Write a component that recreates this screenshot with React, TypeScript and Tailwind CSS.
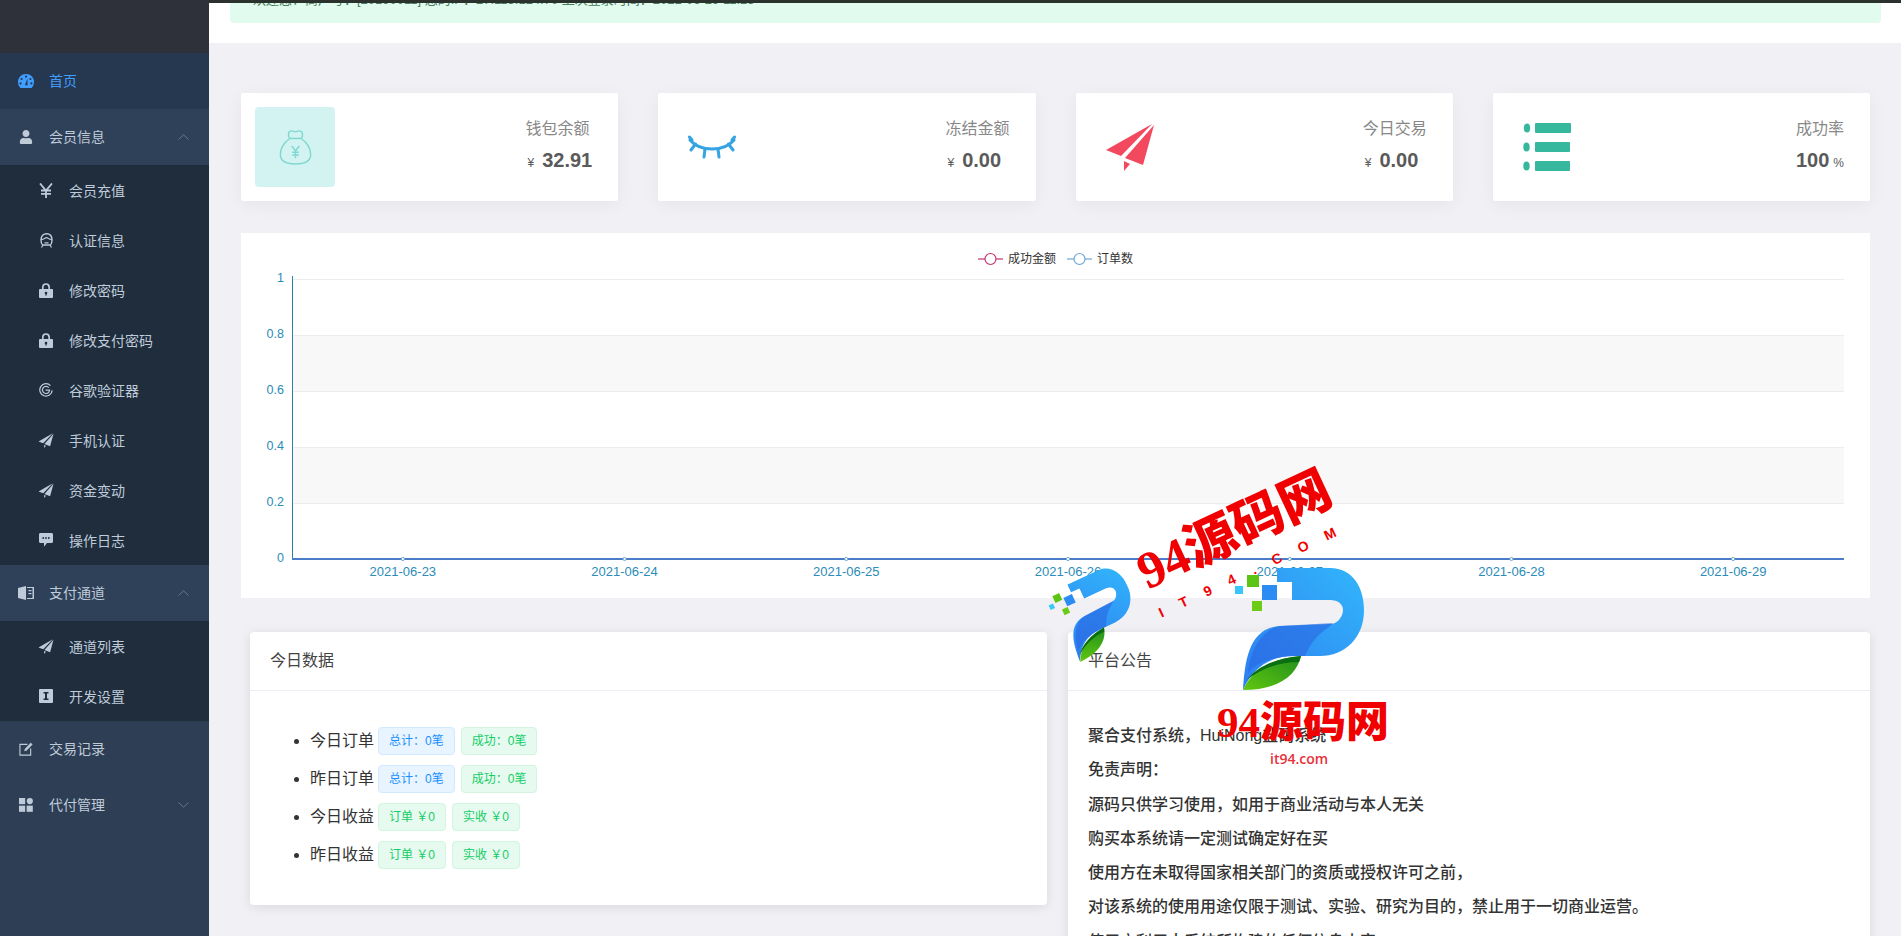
import { type ReactNode, type SVGProps } from "react";
import { FaUser } from "react-icons/fa";

const sansStack = "font-['Liberation_Sans','Noto_Sans_CJK_SC',sans-serif]";

// --- Small hand-drawn sidebar icons --------------------------------------------
function GaugeIcon(props: SVGProps<SVGSVGElement>) {
  return (
    <svg viewBox="0 0 16 14" {...props}>
      <path d="M8 0 C3.5 0 0 3.5 0 8 C0 10.5 1 12.6 2.5 14 H13.5 C15 12.6 16 10.5 16 8 C16 3.5 12.5 0 8 0 Z" fill="currentColor" />
      <g fill="#263750">
        <circle cx="8" cy="2.6" r="1.1" />
        <circle cx="3.6" cy="5" r="1.1" />
        <circle cx="12.4" cy="5" r="1.1" />
        <circle cx="2.6" cy="9.4" r="1.1" />
        <circle cx="13.4" cy="9.4" r="1.1" />
        <path d="M7 11 L9.4 4.5 L9.6 11.5 Z" />
      </g>
    </svg>
  );
}

function YenIcon(props: SVGProps<SVGSVGElement>) {
  return (
    <svg viewBox="0 0 14 15" fill="none" stroke="currentColor" strokeWidth="1.8" {...props}>
      <path d="M1 0.5 L7 7.5 L13 0.5 M7 7.5 V15 M2 7.5 H12 M2 10.8 H12" />
    </svg>
  );
}

function HeadIcon(props: SVGProps<SVGSVGElement>) {
  return (
    <svg viewBox="0 0 15 15" fill="none" stroke="currentColor" {...props}>
      <path d="M2 7 C2 2.5 4.5 0.8 7.5 0.8 C10.5 0.8 13 2.5 13 7 C13 9 12.8 11 11.5 12 H3.5 C2.2 11 2 9 2 7 Z" strokeWidth="1.4" />
      <path d="M2 6.5 C5 6.5 6 5 7.5 4.5 C9 5 10 6.5 13 6.5" strokeWidth="1.3" />
      <path d="M4 12 L2.5 14.5 M11 12 L12.5 14.5 M5.5 9.8 H9.5" strokeWidth="1.2" />
    </svg>
  );
}

function LockIcon(props: SVGProps<SVGSVGElement>) {
  return (
    <svg viewBox="0 0 14 15" {...props}>
      <path d="M3.8 7 V4.4 C3.8 2.4 5.2 1 7 1 C8.8 1 10.2 2.4 10.2 4.4 V7" fill="none" stroke="currentColor" strokeWidth="1.7" />
      <path d="M1 6 H13 C13.5 6 14 6.5 14 7 V14 C14 14.5 13.5 15 13 15 H1 C0.5 15 0 14.5 0 14 V7 C0 6.5 0.5 6 1 6 Z" fill="currentColor" />
      <circle cx="7" cy="10" r="1.3" fill="#1f2d3d" />
      <rect x="6.4" y="10" width="1.2" height="2.6" fill="#1f2d3d" />
    </svg>
  );
}

function RingGIcon(props: SVGProps<SVGSVGElement>) {
  return (
    <svg viewBox="0 0 14 14" fill="none" stroke="currentColor" strokeWidth="1.2" {...props}>
      <path d="M11.5 2.6 A6.2 6.2 0 1 0 13.2 7.4" />
      <path d="M9.8 4.6 A3.6 3.6 0 1 0 10.6 7.2 H6.6" />
    </svg>
  );
}

function PlaneIcon(props: SVGProps<SVGSVGElement>) {
  return (
    <svg viewBox="0 0 48 48" fill="currentColor" {...props}>
      <path d="M46 1 L0 27 L15 33 Z" />
      <path d="M48 2 L19 35 L37 42 Z" />
      <path d="M18 38 L24 41 L18 48 Z" />
    </svg>
  );
}

function BubbleIcon(props: SVGProps<SVGSVGElement>) {
  return (
    <svg viewBox="0 0 14 14" {...props}>
      <path d="M1.5 0 H12.5 C13.4 0 14 0.6 14 1.5 V8.5 C14 9.4 13.4 10 12.5 10 H8 L5 13.8 V10 H1.5 C0.6 10 0 9.4 0 8.5 V1.5 C0 0.6 0.6 0 1.5 0 Z" fill="currentColor" />
      <g fill="#1f2d3d">
        <circle cx="4.2" cy="5" r="0.9" />
        <circle cx="7" cy="5" r="0.9" />
        <circle cx="9.8" cy="5" r="0.9" />
      </g>
    </svg>
  );
}

function BookIcon(props: SVGProps<SVGSVGElement>) {
  return (
    <svg viewBox="0 0 16 14" fill="currentColor" {...props}>
      <path d="M0 2 L8 0 V14 L0 12 Z" />
      <path d="M9 1 H16 V13 H9 V12 H14.5 V2 H9 Z" />
      <rect x="10.5" y="4" width="3" height="1.2" />
      <rect x="10.5" y="7" width="3" height="1.2" />
    </svg>
  );
}

function InfoSquareIcon(props: SVGProps<SVGSVGElement>) {
  return (
    <svg viewBox="0 0 14 14" {...props}>
      <rect width="14" height="14" rx="1" fill="currentColor" />
      <path d="M4.5 3 H9.5 V4.5 H8 V9.5 H9.5 V11 H4.5 V9.5 H6 V4.5 H4.5 Z" fill="#1f2d3d" />
    </svg>
  );
}

function EditIcon(props: SVGProps<SVGSVGElement>) {
  return (
    <svg viewBox="0 0 15 15" fill="none" stroke="currentColor" {...props}>
      <path d="M9 2.5 H1 V14 H12.5 V7" strokeWidth="1.2" />
      <path d="M6 9.5 L6.5 7.5 L12.5 1 L14.2 2.6 L8 9 Z" fill="currentColor" strokeWidth="0.6" />
    </svg>
  );
}

function AppsIcon(props: SVGProps<SVGSVGElement>) {
  return (
    <svg viewBox="0 0 15 15" fill="currentColor" {...props}>
      <rect width="6.6" height="6.6" />
      <circle cx="11.6" cy="3.3" r="3.3" />
      <rect y="8.2" width="6.6" height="6.6" />
      <rect x="8.2" y="8.2" width="6.6" height="6.6" />
    </svg>
  );
}

function Chevron({ up }: { up?: boolean }) {
  return (
    <svg viewBox="0 0 11 6" className="absolute left-[178px] top-[25px] h-[6px] w-[11px]" fill="none" stroke="#66768a">
      <path d={up ? "M0.5 5.5 L5.5 0.8 L10.5 5.5" : "M0.5 0.5 L5.5 5.2 L10.5 0.5"} />
    </svg>
  );
}

// --- Stat card drawings --------------------------------------------------------
function MoneyBag() {
  return (
    <svg viewBox="0 0 34 38" className="h-[36px] w-[33px]" fill="none" stroke="#7fd8d0" strokeWidth="1.5">
      <path d="M11 10 C8 6 10 2 13 2 C15 2 15.5 3 17 3 C18.5 3 19 2 21 2 C24 2 26 6 23 10" />
      <path d="M11 10 H23" />
      <path d="M11 10 C4 15 1 21 1 27 C1 33 6 37 17 37 C28 37 33 33 33 27 C33 21 30 15 23 10" />
      <path d="M13 18 L17 23 L21 18 M17 23 V31 M13.5 24.5 H20.5 M13.5 27.5 H20.5" strokeWidth="1.5" />
    </svg>
  );
}

function ClosedEye() {
  return (
    <svg viewBox="0 0 48 24" className="h-[24px] w-[48px]" fill="none" stroke="#36a3e3" strokeWidth="3" strokeLinecap="round">
      <path d="M2 5 C12 17 36 17 46 5" />
      <path d="M1.5 2 L4 5 M3 15 L7.5 9 M16 22 L17 14 M31 22 L30 14 M45 15 L40.5 9 M46.5 2 L44 5" />
    </svg>
  );
}

function ListGlyph() {
  return (
    <svg viewBox="0 0 48 48" className="h-[48px] w-[48px]" fill="#36b89e">
      <ellipse cx="4" cy="5" rx="3.2" ry="4.5" />
      <rect x="12" y="0" width="36" height="10" rx="1" />
      <ellipse cx="3.5" cy="24" rx="3.2" ry="4.5" />
      <rect x="12" y="19" width="35" height="10" rx="1" />
      <ellipse cx="3.5" cy="43" rx="3.2" ry="4.5" />
      <rect x="12" y="38" width="35" height="10" rx="1" />
    </svg>
  );
}

// The "P" mark of the watermark. `id` keeps the gradients apart between the two copies.
function PLogo({ id, className }: { id: string; className?: string }) {
  return (
    <svg viewBox="0 0 129 122" className={className}>
      <defs>
        <linearGradient id={`${id}-b`} x1="0" y1="1" x2="1" y2="0">
          <stop offset="0" stopColor="#2d7df0" />
          <stop offset="1" stopColor="#32b6fb" />
        </linearGradient>
        <linearGradient id={`${id}-g`} x1="0" y1="1" x2="1" y2="0">
          <stop offset="0" stopColor="#62c70f" />
          <stop offset="1" stopColor="#1f8f1c" />
        </linearGradient>
      </defs>
      <path
        d="M42 0 H95 C118 0 129 20 129 42 C129 70 110 88 85 88 L60 88 C40 88 20 95 8 122 C10 90 15 60 45 58 L95 56 C103 56 108 48 108 42 C108 36 103 32 95 32 H57 V14 H42 Z"
        fill={`url(#${id}-b)`}
      />
      <path d="M45 58 L98 55 C92 62 80 65 70 88 L60 88 C40 88 20 95 13 105 C15 85 25 62 45 58 Z" fill="#2a62e0" opacity="0.55" />
      <path d="M8 122 C18 100 40 90 66 88 C62 106 45 122 8 122 Z" fill={`url(#${id}-g)`} />
      <path d="M12 112 C22 98 42 90 66 88 L64 94 C45 94 26 100 12 112 Z" fill="#0a6f12" />
      <rect x="12" y="7" width="12" height="12" fill="#5cc413" />
      <rect x="27" y="17" width="15" height="15" fill="#2b8df3" />
      <rect x="0" y="18" width="8" height="8" fill="#3bc6fb" />
      <rect x="17" y="33" width="10" height="10" fill="#6ccb16" />
    </svg>
  );
}

// --- Sidebar -------------------------------------------------------------------
type NavRowProps = {
  icon: ReactNode;
  label: string;
  chevron?: "up" | "down";
  active?: boolean;
  open?: boolean;
};

function NavRow({ icon, label, chevron, active, open }: NavRowProps) {
  return (
    <div
      className={`relative flex h-[56px] items-center pl-[18px] text-sm ${
        active ? "bg-[#263750] text-[#409eff]" : "text-[#bfcbd9]"
      } ${open ? "bg-[#2f4159]" : ""}`}
    >
      <span className="flex w-[16px] justify-center">{icon}</span>
      <span className="ml-[15px]">{label}</span>
      {chevron && <Chevron up={chevron === "up"} />}
    </div>
  );
}

function SubRow({ icon, label }: { icon: ReactNode; label: string }) {
  return (
    <div className="flex h-[50px] items-center pl-[38px] text-sm text-[#bfcbd9]">
      <span className="flex w-[16px] justify-center">{icon}</span>
      <span className="ml-[15px] pt-[1px]">{label}</span>
    </div>
  );
}

const iconSize = "h-[14px] w-[14px]";

function Sidebar() {
  return (
    <aside className="h-full w-[209px] shrink-0 bg-[#2e3e54]">
      <div className="h-[53px] bg-[#2e3139]" />
      <NavRow active icon={<GaugeIcon className="h-[14px] w-[16px]" />} label="首页" />
      <NavRow open chevron="up" icon={<FaUser className={iconSize} />} label="会员信息" />
      <div className="bg-[#1f2d3d]">
        <SubRow icon={<YenIcon className="h-[15px] w-[14px]" />} label="会员充值" />
        <SubRow icon={<HeadIcon className="h-[15px] w-[15px]" />} label="认证信息" />
        <SubRow icon={<LockIcon className="h-[15px] w-[14px]" />} label="修改密码" />
        <SubRow icon={<LockIcon className="h-[15px] w-[14px]" />} label="修改支付密码" />
        <SubRow icon={<RingGIcon className={iconSize} />} label="谷歌验证器" />
        <SubRow icon={<PlaneIcon className="h-[15px] w-[16px] shrink-0" />} label="手机认证" />
        <SubRow icon={<PlaneIcon className="h-[15px] w-[16px] shrink-0" />} label="资金变动" />
        <SubRow icon={<BubbleIcon className={iconSize} />} label="操作日志" />
      </div>
      <NavRow open chevron="up" icon={<BookIcon className="h-[14px] w-[16px]" />} label="支付通道" />
      <div className="bg-[#1f2d3d]">
        <SubRow icon={<PlaneIcon className="h-[15px] w-[16px] shrink-0" />} label="通道列表" />
        <SubRow icon={<InfoSquareIcon className={iconSize} />} label="开发设置" />
      </div>
      <NavRow icon={<EditIcon className={iconSize} />} label="交易记录" />
      <NavRow chevron="down" icon={<AppsIcon className={iconSize} />} label="代付管理" />
    </aside>
  );
}

// --- Stat cards ----------------------------------------------------------------
type StatCardProps = {
  icon: ReactNode;
  iconBox?: boolean;
  title: string;
  value: string;
  unit: string;
  unitAfter?: boolean;
};

function StatCard({ icon, iconBox, title, value, unit, unitAfter }: StatCardProps) {
  return (
    <div className="flex h-[108px] items-center justify-between rounded-[2px] bg-white pl-[14px] pr-[26px] shadow-[0_4px_18px_rgba(0,0,0,0.05)]">
      <div
        className={`flex h-[80px] w-[80px] items-center justify-center rounded-[4px] ${iconBox ? "bg-[#d2f3f1]" : ""}`}
      >
        {icon}
      </div>
      <div className="pb-[5px]">
        <div className="text-base leading-[22px] text-[#888888]">{title}</div>
        <div className="mt-[8px] flex items-baseline font-bold text-[#5a5a5a]">
          {!unitAfter && <span className="ml-[2px] mr-[8px] text-xs font-normal">¥</span>}
          <span className="text-[20px] leading-[24px]">{value}</span>
          {unitAfter && <span className="ml-[4px] text-xs font-normal">{unit}</span>}
        </div>
      </div>
    </div>
  );
}

// --- Chart (zero-valued line chart, drawn the way the chart lib renders it) -----
const chartDays = ["2021-06-23", "2021-06-24", "2021-06-25", "2021-06-26", "2021-06-27", "2021-06-28", "2021-06-29"];
const yTicks = ["1", "0.8", "0.6", "0.4", "0.2", "0"];

function TrendChart() {
  const left = 51;
  const right = 1603;
  const top = 46;
  const step = 56;
  const bottom = top + step * 5;
  const band = (right - left) / chartDays.length;

  return (
    <svg viewBox="0 0 1629 365" className="block h-[365px] w-full" fontFamily="Liberation Sans, Noto Sans CJK SC, sans-serif" fontSize="12">
      {/* legend */}
      <path d="M737 26 H762" stroke="#c23572" strokeWidth="1.2" />
      <circle cx="749.5" cy="26" r="5.5" fill="#fff" stroke="#c23572" strokeWidth="1.2" />
      <text x="767" y="30" fill="#333">
        成功金额
      </text>
      <path d="M826 26 H851" stroke="#6ea6d8" strokeWidth="1.2" />
      <circle cx="838.5" cy="26" r="5.5" fill="#fff" stroke="#6ea6d8" strokeWidth="1.2" />
      <text x="856" y="30" fill="#333">
        订单数
      </text>

      {/* bands and grid */}
      <rect x={left} y={top + step} width={right - left} height={step} fill="#f8f8f8" />
      <rect x={left} y={top + step * 3} width={right - left} height={step} fill="#f8f8f8" />
      {yTicks.map((tick, i) => (
        <g key={tick}>
          {i < 5 && <path d={`M${left} ${top + i * step + 0.5} H${right}`} stroke="#ececec" />}
          <text x={left - 8} y={top + i * step + 3} textAnchor="end" fill="#2a8cba" fontSize="12.5">
            {tick}
          </text>
        </g>
      ))}

      {/* axes */}
      <path d={`M${left + 0.5} ${top - 3} V${bottom}`} stroke="#2f7fa8" />
      <path d={`M${left} ${bottom} H${right}`} stroke="#4a7cc9" strokeWidth="2" />
      {chartDays.map((day, i) => (
        <g key={day}>
          <circle cx={left + band * (i + 0.5)} cy={bottom} r="1.6" fill="#fff" stroke="#6ea6d8" />
          <text x={left + band * (i + 0.5)} y={bottom + 17} textAnchor="middle" fill="#2a8cba" fontSize="13">
            {day}
          </text>
        </g>
      ))}
    </svg>
  );
}

// --- Today's data panel --------------------------------------------------------
function Tag({ children, tone }: { children: ReactNode; tone: "blue" | "green" }) {
  return (
    <span
      className={`inline-flex h-[28px] items-center rounded-[4px] border px-[10px] text-xs ${
        tone === "blue"
          ? "border-[#d1e9ff] bg-[#e8f4ff] text-[#1890ff]"
          : "border-[#d0f5e0] bg-[#e7faf0] text-[#13ce66]"
      }`}
    >
      {children}
    </span>
  );
}

const todayRows = [
  { label: "今日订单", tags: ["总计：0笔", "成功：0笔"], kind: "count" },
  { label: "昨日订单", tags: ["总计：0笔", "成功：0笔"], kind: "count" },
  { label: "今日收益", tags: ["订单 ￥0", "实收 ￥0"], kind: "money" },
  { label: "昨日收益", tags: ["订单 ￥0", "实收 ￥0"], kind: "money" },
];

const notice = [
  "聚合支付系统，HuiNong盐码系统",
  "免责声明：",
  "源码只供学习使用，如用于商业活动与本人无关",
  "购买本系统请一定测试确定好在买",
  "使用方在未取得国家相关部门的资质或授权许可之前，",
  "对该系统的使用用途仅限于测试、实验、研究为目的，禁止用于一切商业运营。",
  "使用方利用本系统所构建的任何信息内容",
];

function PanelHeader({ title }: { title: string }) {
  return (
    <div className="flex h-[59px] items-center border-b border-[#ebeef5] px-[20px] text-base text-[#444444]">{title}</div>
  );
}

// --- Watermark sitting over the page -------------------------------------------
function Watermark() {
  return (
    <div className="pointer-events-none absolute inset-0 overflow-hidden text-[#f00000]">
      <PLogo id="small" className="absolute left-[1056px] top-[575px] w-[80px] -rotate-[25deg]" />
      <PLogo id="large" className="absolute left-[1235px] top-[568px] w-[129px]" />
      <div className="absolute left-[1130px] top-[498px] w-[220px] -rotate-[25deg] whitespace-nowrap font-['Liberation_Serif','Noto_Sans_CJK_SC',serif] text-[52px] font-black leading-[60px]">
        94源码网
      </div>
      <div className="absolute left-[1150px] top-[562px] w-[200px] -rotate-[25deg] whitespace-nowrap font-['Liberation_Sans',sans-serif] text-[14px] font-bold leading-[18px] tracking-[18.5px]">
        IT94.COM
      </div>
      <div className="absolute left-[1217px] top-[698px] whitespace-nowrap font-['Liberation_Serif','Noto_Sans_CJK_SC',serif] text-[43px] font-black leading-[50px]">
        94源码网
      </div>
      <div className="absolute left-[1270px] top-[750px] whitespace-nowrap font-['Open_Sans',sans-serif] text-[14px] font-semibold leading-[18px] text-[#e8303a]">
        it94.com
      </div>
    </div>
  );
}

export default function App() {
  return (
    <div className={`relative flex h-[936px] overflow-hidden bg-[#f0f0f5] ${sansStack}`}>
      <Sidebar />

      <main className="min-w-0 flex-1">
        <div className="h-[3px] bg-[#2b322d]" />

        {/* Alert, scrolled almost out of view */}
        <div className="h-[40px] bg-white pl-[21px] pr-[20px]">
          <div className="relative h-[20px] overflow-hidden rounded-b-[4px] bg-[#e1fbee]">
            <p className="absolute -top-[11px] left-[23px] whitespace-nowrap text-[13px] leading-[16px] text-[#4b7a5e]">
              欢迎您！商户号：[20190011] 您的IP：27.115.124.70 上次登录时间：2021-06-29 11:23
            </p>
          </div>
        </div>

        <div className="pl-[32px] pr-[31px] pt-[50px]">
          <div className="grid grid-cols-4 gap-[40px]">
            <StatCard iconBox icon={<MoneyBag />} title="钱包余额" value="32.91" unit="¥" />
            <StatCard icon={<ClosedEye />} title="冻结金额" value="0.00" unit="¥" />
            <StatCard
              icon={<PlaneIcon className="h-[48px] w-[48px] text-[#f2495f]" />}
              title="今日交易"
              value="0.00"
              unit="¥"
            />
            <StatCard icon={<ListGlyph />} title="成功率" value="100" unit="%" unitAfter />
          </div>

          <div className="mt-[32px] h-[365px] bg-white">
            <TrendChart />
          </div>

          <div className="ml-[9px] mt-[34px] grid grid-cols-[797px_1fr] gap-[21px]">
            <section className="h-[273px] rounded-[4px] bg-white shadow-[0_2px_12px_rgba(0,0,0,0.1)]">
              <PanelHeader title="今日数据" />
              <ul className="list-disc pl-[60px] pt-[31px] text-base text-[#333333]">
                {todayRows.map((row) => (
                  <li key={row.label} className="h-[38px] leading-[38px]">
                    <span className="inline-flex items-center gap-[6px] align-top">
                      <span className="-mr-[2px]">{row.label}</span>
                      {row.tags.map((tag, i) => (
                        <Tag key={tag} tone={row.kind === "count" && i === 0 ? "blue" : "green"}>
                          {tag}
                        </Tag>
                      ))}
                    </span>
                  </li>
                ))}
              </ul>
            </section>

            <section className="h-[400px] rounded-[4px] bg-white shadow-[0_2px_12px_rgba(0,0,0,0.1)]">
              <PanelHeader title="平台公告" />
              <div className="px-[20px] pt-[33px] text-base font-medium text-[#333333]">
                {notice.map((line) => (
                  <p key={line} className="mb-[10.3px] leading-[24px]">
                    {line}
                  </p>
                ))}
              </div>
            </section>
          </div>
        </div>
      </main>

      <Watermark />
    </div>
  );
}
